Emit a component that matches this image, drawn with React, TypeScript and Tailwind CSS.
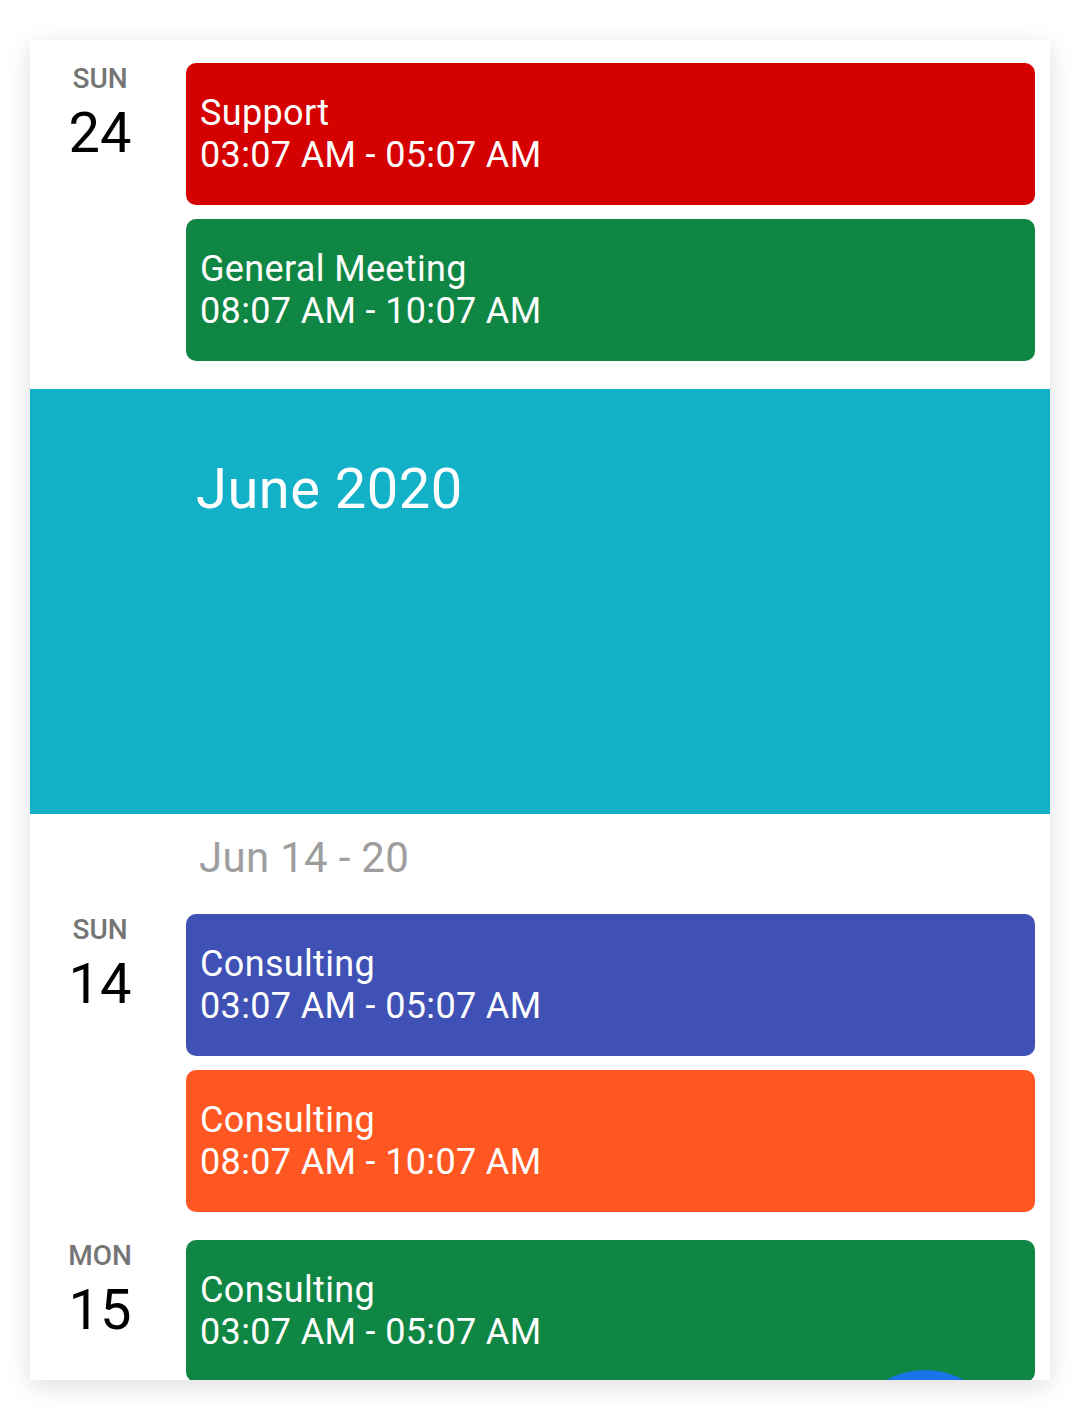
import React from "react";

type Ev = { title: string; time: string; color: string };

function EventCard({ ev }: { ev: Ev }) {
  return (
    <div
      className={`h-[142px] rounded-[10px] pl-[14px] flex flex-col justify-center text-white text-[36px] leading-[42px] tracking-[0.35px] ${ev.color}`}
    >
      <div>{ev.title}</div>
      <div>{ev.time}</div>
    </div>
  );
}

function DayGroup({ dow, day, events }: { dow: string; day: string; events: Ev[] }) {
  return (
    <div className="flex">
      <div className="w-[156px] flex flex-col items-center pt-[2px] pr-[16px]">
        <div className="text-[28px] leading-[28px] font-medium text-[#757575]">{dow}</div>
        <div className="text-[56px] leading-[56px] text-black mt-[12px]">{day}</div>
      </div>
      <div className="flex-1 mr-[15px] flex flex-col gap-[14px]">
        {events.map((e, i) => (
          <EventCard key={i} ev={e} />
        ))}
      </div>
    </div>
  );
}

export default function App() {
  return (
    <div
      className="w-[1080px] h-[1420px] bg-white pt-[40px] px-[30px]"
      style={{ fontFamily: "Roboto, 'Noto Sans', sans-serif" }}
    >
      <div className="relative h-[1340px] bg-white overflow-hidden shadow-[0_6px_24px_rgba(0,0,0,0.13)]">
        <div className="pt-[23px]">
          <DayGroup
            dow="SUN"
            day="24"
            events={[
              { title: "Support", time: "03:07 AM - 05:07 AM", color: "bg-[#D50000]" },
              { title: "General Meeting", time: "08:07 AM - 10:07 AM", color: "bg-[#0F8644]" },
            ]}
          />
        </div>
        <div className="mt-[28px] h-[425px] bg-[#12B1C7] pl-[166px] pt-[72px]">
          <div className="text-white text-[56px] leading-[56px] tracking-[0.5px]">June 2020</div>
        </div>
        <div className="pl-[169px] pt-[23px] text-[42px] leading-[42px] tracking-[0.3px] text-[#9E9E9E]">Jun 14 - 20</div>
        <div className="mt-[35px]">
          <DayGroup
            dow="SUN"
            day="14"
            events={[
              { title: "Consulting", time: "03:07 AM - 05:07 AM", color: "bg-[#3F51B5]" },
              { title: "Consulting", time: "08:07 AM - 10:07 AM", color: "bg-[#FF5722]" },
            ]}
          />
        </div>
        <div className="mt-[28px]">
          <DayGroup
            dow="MON"
            day="15"
            events={[
              { title: "Consulting", time: "03:07 AM - 05:07 AM", color: "bg-[#0F8644]" },
            ]}
          />
        </div>
        <div className="absolute left-[815px] top-[1330px] w-[160px] h-[160px] rounded-full bg-[#1A73E8]" />
      </div>
    </div>
  );
}
